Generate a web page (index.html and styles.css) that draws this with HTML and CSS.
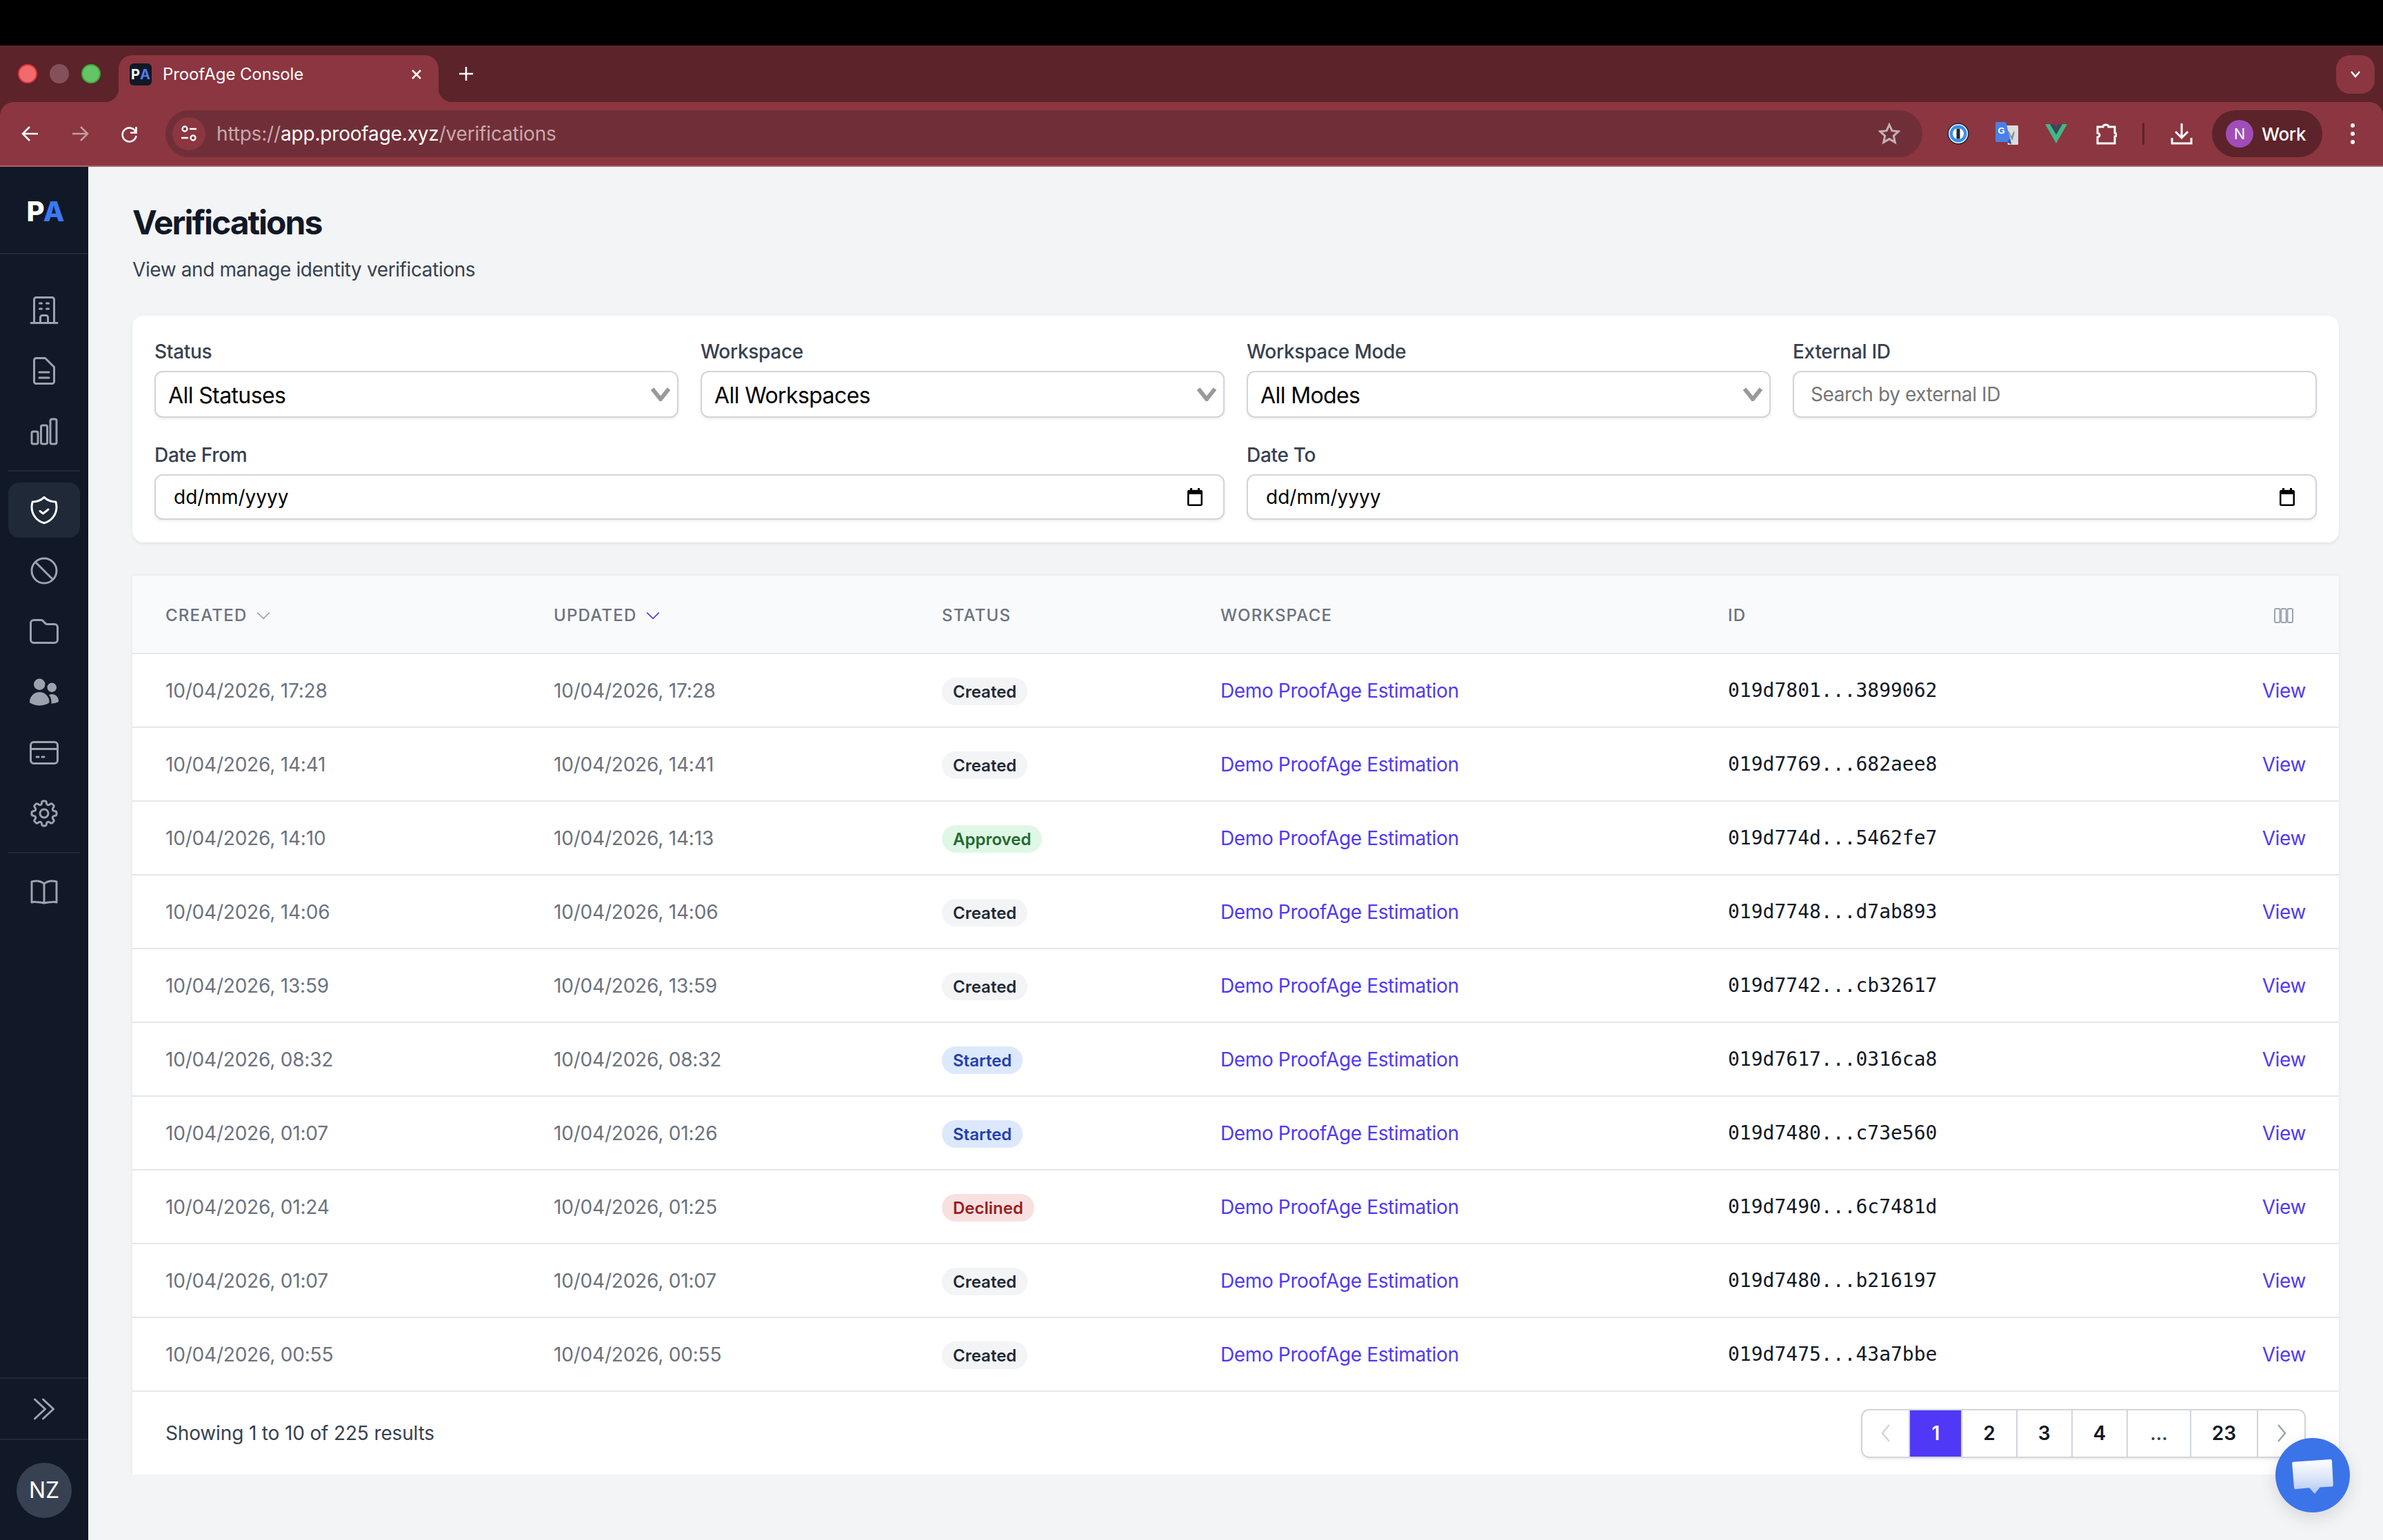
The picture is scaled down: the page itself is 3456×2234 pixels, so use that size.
FILE: index.html
```html
<!DOCTYPE html>
<html lang="en">
<head>
<meta charset="utf-8">
<title>ProofAge Console</title>
<link rel="stylesheet" href="styles.css">
</head>
<body>
<div class="window">
  <div class="notch"></div>
  <div class="tabstrip">
    <div class="lights"><span class="light red"></span><span class="light grey"></span><span class="light green"></span></div>
    <div class="tab">
      <span class="favicon"><b>P</b><i>A</i></span>
      <span class="tab-title">ProofAge Console</span>
      <svg class="tab-close" viewBox="0 0 16 16"><path d="M2 2l12 12M14 2L2 14"/></svg>
    </div>
    <svg class="new-tab" viewBox="0 0 20 20"><path d="M10 0v20M0 10h20"/></svg>
    <div class="tab-search"><svg viewBox="0 0 16 12"><path d="M2 2l6 7 6-7"/></svg></div>
  </div>
  <div class="toolbar">
    <svg class="nav" viewBox="0 0 28 28"><path d="M25 14H4M13 4L3 14l10 10"/></svg>
    <svg class="nav dim" viewBox="0 0 28 28"><path d="M3 14h21M15 4l10 10-10 10"/></svg>
    <svg class="nav" viewBox="0 0 28 28"><path d="M23 12a10 10 0 1 0 .5 5M23.500 4v8.500H15"/></svg>
    <div class="omnibox">
      <span class="site-info"><svg viewBox="0 0 26 26"><circle cx="7" cy="6" r="3.500"/><path d="M14 6h10M2 19h10"/><circle cx="19" cy="19" r="3.500"/></svg></span>
      <span class="url"><span class="url-dim">https://</span>app.proofage.xyz<span class="url-dim">/verifications</span></span>
      <svg class="star" viewBox="0 0 32 32"><path d="M16 3l3.900 8.700 9.400 1-7 6.400 2 9.300-8.300-4.800-8.300 4.800 2-9.300-7-6.400 9.400-1z"/></svg>
    </div>
    <div class="ext-row">
      <svg class="ext onepass" viewBox="0 0 32 32"><circle cx="16" cy="16" r="15.500" fill="#1f2630"/><circle cx="16" cy="16" r="14" fill="#f4f6f8"/><circle cx="16" cy="16" r="12.500" fill="#3b8df1"/><circle cx="16" cy="16" r="8" fill="#fff"/><rect x="13.500" y="8.500" width="5" height="15" fill="#23272e"/></svg>
      <svg class="ext translate" viewBox="0 0 34 34"><path d="M14 5h18a1 1 0 0 1 1 1v26a1 1 0 0 1-1 1H18z" fill="#dcdcdc"/><path d="M19 14l4 9 4-9-3 12" fill="none" stroke="#7c8a96" stroke-width="1.500"/><path d="M1 0h14l8 31-6-2H1a1 1 0 0 1-1-1V1a1 1 0 0 1 1-1z" fill="#4a7fe6"/><path d="M17 29l6 4-2-9z" fill="#2f55b5"/><text x="3.500" y="17" class="g-letter">G</text></svg>
      <svg class="ext vue" viewBox="0 0 32 28"><path d="M0 0h7l9 15 9-15h7L16 28z" fill="#41b883"/><path d="M7 0h6l3 5 3-5h6l-9 15z" fill="#35495e"/></svg>
      <svg class="ext puzzle" viewBox="0 0 30 32"><path d="M2 6h8c0-4 8-4 8 0h9v9c3 0 3 5 0 5v10H2v-9c4-1 4-5 0-6z"/></svg>
      <span class="ext-divider"></span>
      <svg class="ext download" viewBox="0 0 32 32"><path d="M16 1v20M7 13l9 9 9-9M2 22v8h28v-8"/></svg>
      <div class="profile"><span class="profile-avatar">N</span><span class="profile-name">Work</span></div>
      <span class="kebab"><i></i><i></i><i></i></span>
    </div>
  </div>

  <div class="app">
    <aside class="sidebar">
      <div class="logo"><span class="logo-p">P</span><span class="logo-a">A</span></div>
      <nav class="side-nav">
        <a class="side-item"><svg viewBox="0 0 24 24" class="ico"><path d="M2.500 21.250h19M4.750 21V4.250a1.500 1.500 0 0 1 1.500-1.500h11.500a1.500 1.500 0 0 1 1.500 1.500V21M9.250 21v-3.750a1.500 1.500 0 0 1 1.500-1.500h2.500a1.500 1.500 0 0 1 1.500 1.500V21M8.750 7h1.500m3.500 0h1.500m-6.500 4h1.500m3.500 0h1.500"/></svg></a>
        <a class="side-item"><svg viewBox="0 0 24 24" class="ico"><path d="M6.250 2.750h6.500l6.500 6.500v10.500a1.500 1.500 0 0 1-1.500 1.500H6.250a1.500 1.500 0 0 1-1.500-1.500V4.250a1.500 1.500 0 0 1 1.500-1.500zM8.500 13h7M8.500 17h7"/></svg></a>
        <a class="side-item"><svg viewBox="0 0 24 24" class="ico"><path d="M3 13.125C3 12.504 3.504 12 4.125 12h2.250c.621 0 1.125.504 1.125 1.125v6.750C7.500 20.496 6.996 21 6.375 21h-2.250A1.125 1.125 0 0 1 3 19.875v-6.750zM9.750 8.625c0-.621.504-1.125 1.125-1.125h2.250c.621 0 1.125.504 1.125 1.125v11.250c0 .621-.504 1.125-1.125 1.125h-2.250a1.125 1.125 0 0 1-1.125-1.125V8.625zM16.500 4.125c0-.621.504-1.125 1.125-1.125h2.250C20.496 3 21 3.504 21 4.125v15.750c0 .621-.504 1.125-1.125 1.125h-2.250a1.125 1.125 0 0 1-1.125-1.125V4.125z"/></svg></a>
        <div class="side-rule"></div>
        <a class="side-item active"><svg viewBox="0 0 24 24" class="ico"><path d="M9 12.750L11.250 14.500 15 11.500M12 2.714A11.959 11.959 0 0 1 3.598 6 11.990 11.990 0 0 0 3 9.749c0 5.592 3.824 10.290 9 11.623 5.176-1.332 9-6.030 9-11.622 0-1.310-.210-2.571-.598-3.751h-.152c-3.196 0-6.100-1.248-8.250-3.285z"/></svg></a>
        <a class="side-item"><svg viewBox="0 0 24 24" class="ico"><path d="M18.364 18.364A9 9 0 0 0 5.636 5.636m12.728 12.728A9 9 0 0 1 5.636 5.636m12.728 12.728L5.636 5.636"/></svg></a>
        <a class="side-item"><svg viewBox="0 0 24 24" class="ico"><path d="M13.060 6.310l-2.120-2.120a1.500 1.500 0 0 0-1.061-.440H4.500A2.250 2.250 0 0 0 2.250 6v12a2.250 2.250 0 0 0 2.250 2.250h15A2.250 2.250 0 0 0 21.750 18V9a2.250 2.250 0 0 0-2.250-2.250h-5.379a1.500 1.500 0 0 1-1.060-.440z"/></svg></a>
        <a class="side-item"><svg viewBox="0 0 24 24" class="ico solid"><path d="M4.500 6.375a4.125 4.125 0 1 1 8.250 0 4.125 4.125 0 0 1-8.250 0zM14.250 8.625a3.375 3.375 0 1 1 6.750 0 3.375 3.375 0 0 1-6.750 0zM1.500 19.125a7.125 7.125 0 0 1 14.250 0v.003l-.001.119a.75.75 0 0 1-.363.63 13.067 13.067 0 0 1-6.761 1.873c-2.472 0-4.786-.684-6.760-1.873a.75.75 0 0 1-.364-.63l-.001-.122zM17.250 19.128l-.001.144a2.250 2.250 0 0 1-.233.96 10.088 10.088 0 0 0 5.060-1.010.75.75 0 0 0 .42-.643 4.875 4.875 0 0 0-6.957-4.611 8.586 8.586 0 0 1 1.710 5.157v.003z"/></svg></a>
        <a class="side-item"><svg viewBox="0 0 24 24" class="ico"><rect x="2.250" y="4.250" width="19.500" height="15.500" rx="2.250"/><path d="M2.250 9.250h19.500M6.500 15h1.500M10.500 15H12"/></svg></a>
        <a class="side-item"><svg viewBox="0 0 24 24" class="ico"><path d="M10.343 3.940c.09-.542.56-.94 1.110-.94h1.093c.55 0 1.020.398 1.110.94l.149.894c.07.424.384.764.78.93.398.164.855.142 1.205-.108l.737-.527a1.125 1.125 0 0 1 1.450.12l.773.774c.39.389.44 1.002.12 1.450l-.527.737c-.25.35-.272.806-.107 1.204.165.397.505.71.93.78l.893.15c.543.09.94.56.94 1.109v1.094c0 .55-.397 1.020-.94 1.110l-.893.149c-.425.07-.765.383-.93.78-.165.398-.143.854.107 1.204l.527.738c.32.447.269 1.060-.12 1.450l-.774.773a1.125 1.125 0 0 1-1.449.12l-.738-.527c-.35-.25-.806-.272-1.203-.107-.397.165-.71.505-.781.929l-.149.894c-.09.542-.56.94-1.110.94h-1.094c-.55 0-1.019-.398-1.110-.94l-.148-.894c-.071-.424-.384-.764-.781-.93-.398-.164-.854-.142-1.204.108l-.738.527c-.447.32-1.060.269-1.450-.12l-.773-.774a1.125 1.125 0 0 1-.12-1.450l.527-.737c.25-.35.273-.806.108-1.204-.165-.397-.505-.71-.93-.78l-.894-.15c-.542-.09-.94-.56-.94-1.109v-1.094c0-.55.398-1.020.94-1.110l.894-.149c.424-.07.765-.383.93-.78.165-.398.143-.854-.107-1.204l-.527-.738a1.125 1.125 0 0 1 .12-1.450l.773-.773a1.125 1.125 0 0 1 1.450-.12l.737.527c.35.25.807.272 1.204.107.397-.165.71-.505.78-.929l.15-.894z"/><path d="M15 12a3 3 0 1 1-6 0 3 3 0 0 1 6 0z"/></svg></a>
        <div class="side-rule tail"></div>
        <a class="side-item"><svg viewBox="0 0 24 24" class="ico"><path d="M12 6a9 9 0 0 0-6-2c-1 0-2 .2-3 .5v15a9 9 0 0 1 3-.3c2.300 0 4.400.3 6 .8m0-14a9 9 0 0 1 6-2c1 0 2 .2 3 .5v15a9 9 0 0 0-3-.3c-2.300 0-4.400.3-6 .8m0-14v14"/></svg></a>
      </nav>
      <div class="side-foot">
        <div class="side-expand"><svg viewBox="0 0 24 24" class="ico"><path d="M5.250 5l7.500 7-7.500 7m6-14l7.500 7-7.500 7"/></svg></div>
        <div class="side-user"><span class="user-avatar">NZ</span></div>
      </div>
    </aside>

    <main class="main">
      <h1 class="page-title">Verifications</h1>
      <p class="page-sub">View and manage identity verifications</p>

      <section class="filters">
        <div class="field">
          <label class="field-label">Status</label>
          <div class="select-wrap"><select class="control select"><option>All Statuses</option></select><svg class="select-arrow" viewBox="0 0 28 20"><path d="M2 2l12 15L26 2"/></svg></div>
        </div>
        <div class="field">
          <label class="field-label">Workspace</label>
          <div class="select-wrap"><select class="control select"><option>All Workspaces</option></select><svg class="select-arrow" viewBox="0 0 28 20"><path d="M2 2l12 15L26 2"/></svg></div>
        </div>
        <div class="field">
          <label class="field-label">Workspace Mode</label>
          <div class="select-wrap"><select class="control select"><option>All Modes</option></select><svg class="select-arrow" viewBox="0 0 28 20"><path d="M2 2l12 15L26 2"/></svg></div>
        </div>
        <div class="field">
          <label class="field-label">External ID</label>
          <input class="control input" type="text" placeholder="Search by external ID">
        </div>
        <div class="field span-2">
          <label class="field-label">Date From</label>
          <div class="select-wrap"><input class="control date" type="text" value="dd/mm/yyyy"><svg class="cal" viewBox="0 0 22 26"><path d="M4 0h3v3H4zM15 0h3v3h-3zM1 3h20v6H1z" class="cal-fill"/><rect x="1.250" y="4" width="19.500" height="20.750" rx="1.500"/></svg></div>
        </div>
        <div class="field span-2">
          <label class="field-label">Date To</label>
          <div class="select-wrap"><input class="control date" type="text" value="dd/mm/yyyy"><svg class="cal" viewBox="0 0 22 26"><path d="M4 0h3v3H4zM15 0h3v3h-3zM1 3h20v6H1z" class="cal-fill"/><rect x="1.250" y="4" width="19.500" height="20.750" rx="1.500"/></svg></div>
        </div>
      </section>

      <section class="table-card">
        <div class="row head">
          <div class="th">Created <svg class="sort" viewBox="0 0 24 24"><path d="M19.500 8.250l-7.500 7.500-7.500-7.500"/></svg></div>
          <div class="th">Updated <svg class="sort on" viewBox="0 0 24 24"><path d="M19.500 8.250l-7.500 7.500-7.500-7.500"/></svg></div>
          <div class="th">Status</div>
          <div class="th">Workspace</div>
          <div class="th">ID</div>
          <div class="th end"><svg class="cols" viewBox="0 0 28 22"><rect x="1" y="1" width="7.500" height="20" rx="2"/><rect x="10.250" y="1" width="7.500" height="20" rx="2"/><rect x="19.500" y="1" width="7.500" height="20" rx="2"/></svg></div>
        </div>

        <div class="row"><div class="td">10/04/2026, 17:28</div><div class="td">10/04/2026, 17:28</div><div><span class="badge created">Created</span></div><a class="link">Demo ProofAge Estimation</a><div class="mono">019d7801...3899062</div><a class="link end">View</a></div>
        <div class="row"><div class="td">10/04/2026, 14:41</div><div class="td">10/04/2026, 14:41</div><div><span class="badge created">Created</span></div><a class="link">Demo ProofAge Estimation</a><div class="mono">019d7769...682aee8</div><a class="link end">View</a></div>
        <div class="row"><div class="td">10/04/2026, 14:10</div><div class="td">10/04/2026, 14:13</div><div><span class="badge approved">Approved</span></div><a class="link">Demo ProofAge Estimation</a><div class="mono">019d774d...5462fe7</div><a class="link end">View</a></div>
        <div class="row"><div class="td">10/04/2026, 14:06</div><div class="td">10/04/2026, 14:06</div><div><span class="badge created">Created</span></div><a class="link">Demo ProofAge Estimation</a><div class="mono">019d7748...d7ab893</div><a class="link end">View</a></div>
        <div class="row"><div class="td">10/04/2026, 13:59</div><div class="td">10/04/2026, 13:59</div><div><span class="badge created">Created</span></div><a class="link">Demo ProofAge Estimation</a><div class="mono">019d7742...cb32617</div><a class="link end">View</a></div>
        <div class="row"><div class="td">10/04/2026, 08:32</div><div class="td">10/04/2026, 08:32</div><div><span class="badge started">Started</span></div><a class="link">Demo ProofAge Estimation</a><div class="mono">019d7617...0316ca8</div><a class="link end">View</a></div>
        <div class="row"><div class="td">10/04/2026, 01:07</div><div class="td">10/04/2026, 01:26</div><div><span class="badge started">Started</span></div><a class="link">Demo ProofAge Estimation</a><div class="mono">019d7480...c73e560</div><a class="link end">View</a></div>
        <div class="row"><div class="td">10/04/2026, 01:24</div><div class="td">10/04/2026, 01:25</div><div><span class="badge declined">Declined</span></div><a class="link">Demo ProofAge Estimation</a><div class="mono">019d7490...6c7481d</div><a class="link end">View</a></div>
        <div class="row"><div class="td">10/04/2026, 01:07</div><div class="td">10/04/2026, 01:07</div><div><span class="badge created">Created</span></div><a class="link">Demo ProofAge Estimation</a><div class="mono">019d7480...b216197</div><a class="link end">View</a></div>
        <div class="row"><div class="td">10/04/2026, 00:55</div><div class="td">10/04/2026, 00:55</div><div><span class="badge created">Created</span></div><a class="link">Demo ProofAge Estimation</a><div class="mono">019d7475...43a7bbe</div><a class="link end">View</a></div>

        <div class="table-foot">
          <span class="showing">Showing 1 to 10 of 225 results</span>
          <div class="pager">
            <span class="pg pg-arrow"><svg viewBox="0 0 14 28" class="off"><path d="M12 2L2 14l10 12"/></svg></span>
            <span class="pg current">1</span>
            <span class="pg">2</span>
            <span class="pg">3</span>
            <span class="pg">4</span>
            <span class="pg pg-gap">...</span>
            <span class="pg">23</span>
            <span class="pg pg-arrow"><svg viewBox="0 0 14 28"><path d="M2 2l10 12L2 26"/></svg></span>
          </div>
        </div>
      </section>
    </main>
  </div>

  <div class="chat">
    <svg viewBox="0 0 64 54">
      <defs><linearGradient id="bubble" x1="0" y1="0" x2="0" y2="1"><stop offset="0" stop-color="#ffffff"/><stop offset="0.55" stop-color="#dbe5f8"/><stop offset="1" stop-color="#b0c6ef"/></linearGradient></defs>
      <path d="M3 5L59 1a2 2 0 0 1 2 2l2 37a2 2 0 0 1-2 2L43 43 35 53 27 44 6 46a2 2 0 0 1-2-2L1 7a2 2 0 0 1 2-2z" fill="url(#bubble)"/>
    </svg>
  </div>
</div>
</body>
</html>
```

FILE: styles.css
```css
* { box-sizing: border-box; }
html, body { margin: 0; padding: 0; }
body { background: #000; font-family: Inter, "Liberation Sans", sans-serif; }

.window { position: relative; width: 3456px; height: 2234px; overflow: hidden; display: flex; flex-direction: column; background: #5c232a; }
.notch { height: 66px; background: #000; flex: none; }

/* browser chrome */
.tabstrip { height: 82px; background: #5c232a; flex: none; display: flex; align-items: flex-start; padding-top: 14px; }
.lights { display: flex; gap: 18px; padding: 13px 0 0 26px; width: 172px; }
.light { width: 28px; height: 28px; border-radius: 50%; }
.red { background: #f36a6c; border: 2px solid #d8393c; }
.grey { background: #85505a; }
.green { background: #65c466; border: 2px solid #3ca63f; }
.tab { position: relative; width: 464px; height: 68px; background: #8b3640; border-radius: 20px 20px 0 0; display: flex; align-items: flex-start; padding: 12px 0 0 16px; }
.tab::before, .tab::after { content: ""; position: absolute; bottom: 0; width: 20px; height: 20px; }
.tab::before { left: -20px; background: radial-gradient(circle at 0 0, transparent 20px, #8b3640 20.500px); }
.tab::after { right: -20px; background: radial-gradient(circle at 100% 0, transparent 20px, #8b3640 20.500px); }
.favicon { width: 32px; height: 32px; border-radius: 6px; background: #111827; display: flex; align-items: center; justify-content: center; font-size: 20px; line-height: 32px; font-weight: 700; }
.favicon b { color: #fff; font-weight: 700; }
.favicon i { color: #4f7df0; font-style: normal; }
.tab-title { color: #fff; font-size: 24px; line-height: 32px; margin-left: 16px; width: 360px; white-space: nowrap; letter-spacing: -0.100px; }
.tab-close { width: 16px; height: 16px; margin-top: 8px; fill: none; stroke: #fff; stroke-width: 2.500; }
.new-tab { width: 20px; height: 20px; margin: 17px 0 0 30px; fill: none; stroke: #fff; stroke-width: 2.500; }
.tab-search { margin-left: auto; margin-right: 12px; width: 56px; height: 56px; border-radius: 20px; background: #8b3640; display: flex; align-items: center; justify-content: center; }
.tab-search svg { width: 16px; height: 12px; fill: none; stroke: #fff; stroke-width: 2.500; }

.toolbar { height: 94px; background: #8b3640; flex: none; border-bottom: 2px solid #b0606b; border-radius: 20px 20px 0 0; display: flex; align-items: center; padding: 0 0 0 30px; position: relative; }
.nav { width: 28px; height: 28px; margin-right: 44px; fill: none; stroke: #fff; stroke-width: 2.600; flex: none; }
.nav.dim { stroke: #c59aa0; }
.nav:nth-of-type(3) { margin-right: 38px; }
.omnibox { width: 2548px; height: 68px; background: #702f38; border-radius: 34px; display: flex; align-items: center; padding-left: 10px; flex: none; }
.site-info { width: 48px; height: 48px; border-radius: 50%; background: #8b3640; display: flex; align-items: center; justify-content: center; flex: none; }
.site-info svg { width: 26px; height: 26px; fill: none; stroke: #fff; stroke-width: 2.400; }
.url { margin-left: 16px; font-size: 28px; line-height: 36px; color: #fff; white-space: nowrap; letter-spacing: -0.180px; }
.url-dim { color: #c9a8ad; }
.star { width: 32px; height: 32px; margin-left: auto; margin-right: 32px; fill: none; stroke: #c3b0b3; stroke-width: 3; flex: none; }

.ext-row { display: flex; align-items: center; flex: 1; padding-left: 36px; position: relative; }
.ext { flex: none; }
.onepass { width: 32px; height: 32px; margin-right: 38px; }
.translate { width: 34px; height: 34px; margin-right: 38px; }
.g-letter { font-family: "Liberation Sans", sans-serif; font-size: 13px; font-weight: 700; fill: #fff; }
.vue { width: 32px; height: 28px; margin-right: 42px; }
.puzzle { width: 30px; height: 32px; fill: none; stroke: #fff; stroke-width: 3; margin-right: 37px; }
.ext-divider { width: 3px; height: 32px; border-radius: 2px; background: #5c232a; margin-right: 38px; flex: none; }
.download { width: 32px; height: 32px; fill: none; stroke: #fff; stroke-width: 3; margin-right: 28px; }
.profile { width: 160px; height: 68px; border-radius: 34px; background: #5c232a; display: flex; align-items: center; padding-left: 20px; flex: none; }
.profile-avatar { width: 40px; height: 40px; border-radius: 50%; background: #a04db8; color: #fff; font-size: 22px; line-height: 40px; text-align: center; }
.profile-name { margin-left: 12px; color: #fff; font-size: 26px; font-weight: 500; letter-spacing: -0.300px; }
.kebab { display: flex; flex-direction: column; gap: 6px; margin-left: 41px; }
.kebab i { width: 6px; height: 6px; border-radius: 50%; background: #fff; display: block; }

/* app shell */
.app { flex: 1; display: flex; background: #f3f4f6; min-height: 0; }
.sidebar { width: 128px; flex: none; background: #111827; display: flex; flex-direction: column; }
.logo { height: 127px; flex: none; border-bottom: 2px solid #1f2937; display: flex; align-items: center; justify-content: center; font-size: 40px; font-weight: 800; letter-spacing: -2px; padding: 3px 0 0 2px; }
.logo-p { color: #fff; }
.logo-a { color: #3b78f2; }
.side-nav { display: flex; flex-direction: column; padding: 37px 12px 0; flex: 1; }
.side-item { height: 88px; border-radius: 16px; display: flex; align-items: center; justify-content: center; flex: none; }
.side-item.active { background: #1f2937; height: 80px; margin-bottom: 4px; }
.side-item.active .ico { stroke: #fff; }
.side-rule { height: 2px; background: #1f2937; margin: 12px 0 16px; flex: none; }
.side-rule.tail { margin-bottom: 12px; }
.ico { width: 48px; height: 48px; fill: none; stroke: #9ca3af; stroke-width: 1.500; stroke-linecap: round; stroke-linejoin: round; }
.ico.solid { fill: #9ca3af; stroke: none; }
.side-foot { flex: none; }
.side-expand { height: 91px; border-top: 2px solid #1f2937; border-bottom: 2px solid #1f2937; display: flex; align-items: center; justify-content: center; }
.side-user { height: 145px; display: flex; justify-content: center; padding-top: 33px; }
.user-avatar { width: 80px; height: 80px; border-radius: 50%; background: #374151; color: #fff; font-size: 32px; line-height: 80px; text-align: center; }

/* main */
.main { flex: 1; min-width: 0; padding: 48px 64px 0; }
.page-title { margin: 0; font-size: 48px; line-height: 66px; font-weight: 700; color: #111827; letter-spacing: -2px; }
.page-sub { margin: 15px 0 47px; font-size: 28px; line-height: 40px; color: #374151; letter-spacing: -0.400px; }

.filters { background: #fff; border-radius: 16px; padding: 32px 32px 33px; display: grid; grid-template-columns: repeat(4, 1fr); gap: 34px 32px; box-shadow: 0 2px 4px rgba(0,0,0,.08); margin-bottom: 48px; }
.field { min-width: 0; }
.span-2 { grid-column: span 2; }
.field-label { display: block; font-size: 28px; line-height: 40px; font-weight: 500; color: #374151; margin-bottom: 8px; letter-spacing: -0.300px; }
.control { display: block; width: 100%; background: #fff; border: 2px solid #d1d5db; border-radius: 12px; box-shadow: 0 2px 4px rgba(0,0,0,.08); font-family: Inter, "Liberation Sans", sans-serif; color: #000; outline: none; }
.select { height: 68px; font-size: 32px; padding: 2px 60px 0 18px; appearance: none; letter-spacing: -0.600px; }
.input { height: 68px; font-size: 28px; padding: 0 24px; letter-spacing: -0.400px; }
.input::placeholder { color: #757575; opacity: 1; }
.date { height: 66px; font-size: 28px; padding: 0 26px; }
.select-wrap { position: relative; }
.select-arrow { position: absolute; top: 24px; right: 12px; width: 28px; height: 20px; fill: none; stroke: #9a9a9a; stroke-width: 6; pointer-events: none; }
.cal { position: absolute; top: 20px; right: 32px; width: 22px; height: 26px; fill: none; stroke: #000; stroke-width: 2.500; }
.cal-fill { fill: #000; stroke: none; }

.table-card { background: #fff; box-shadow: 0 0 5px rgba(0,0,0,.07); clip-path: inset(-8px -8px 0 -8px); }
.row { display: grid; grid-template-columns: 563px 563px 404px 736px 1fr 132px; height: 107px; align-items: center; padding: 0 48px; border-bottom: 2px solid #e5e7eb; }
.row.head { height: 114px; background: #f9fafb; }
.th { font-size: 24px; line-height: 32px; letter-spacing: 1.200px; color: #6b7280; text-transform: uppercase; font-weight: 500; display: flex; align-items: center; gap: 10px; padding-top: 3px; }
.th.end { justify-content: flex-end; padding-right: 18px; }
.sort { width: 28px; height: 28px; fill: none; stroke: #9ca3af; stroke-width: 1.500; }
.sort.on { stroke: #4f39f6; }
.cols { width: 28px; height: 22px; fill: none; stroke: #9ca3af; stroke-width: 2; }
.td { font-size: 28px; line-height: 40px; color: #6b7280; white-space: nowrap; letter-spacing: -0.200px; }
.link { font-size: 28px; line-height: 40px; color: #4f39f6; white-space: nowrap; letter-spacing: -0.370px; }
.link.end { text-align: right; }
.mono { font-family: "DejaVu Sans Mono", "Liberation Mono", monospace; font-size: 28px; line-height: 40px; color: #111827; white-space: nowrap; }
.badge { display: inline-block; height: 40px; line-height: 41px; border-radius: 20px; padding: 0 16px; font-size: 24px; font-weight: 600; vertical-align: middle; letter-spacing: 0; position: relative; top: 1px; }
.created { background: #f3f4f6; color: #1f2937; }
.approved { background: #dff8e6; color: #236a30; }
.started { background: #dce8fc; color: #2340b0; }
.declined { background: #f9e0e0; color: #982020; }

.table-foot { height: 120px; display: flex; align-items: center; justify-content: space-between; padding: 0 48px; }
.showing { font-size: 28px; line-height: 40px; color: #374151; letter-spacing: -0.150px; }
.pager { display: flex; height: 71px; border: 2px solid #d1d5db; border-radius: 12px; box-shadow: 0 2px 4px rgba(0,0,0,.08); overflow: hidden; }
.pg { display: flex; align-items: center; justify-content: center; padding: 0 30px; font-size: 28px; font-weight: 600; color: #111827; border-left: 2px solid #d1d5db; }
.pg:first-child { border-left: 0; }
.pg-arrow { padding: 0 26px 0 27px; }
.pg-arrow svg { width: 14px; height: 28px; fill: none; stroke: #9ca3af; stroke-width: 2.500; }
.pg-arrow svg.off { stroke: #d1d5db; }
.current { background: #4f39f6; color: #fff; padding: 0 31px; }
.pg-gap { padding: 0 32px; font-weight: 500; color: #374151; }

.chat { position: absolute; left: 3300px; top: 2086px; width: 108px; height: 108px; border-radius: 50%; background: #3b74e8; box-shadow: 0 8px 24px rgba(0,0,0,.12); display: flex; align-items: center; justify-content: center; padding-top: 4px; }
.chat svg { width: 62px; height: 52px; }
```
